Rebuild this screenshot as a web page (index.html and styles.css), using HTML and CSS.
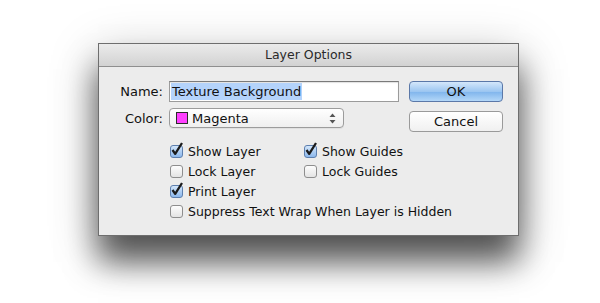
FILE: index.html
```html
<!DOCTYPE html>
<html>
<head>
<meta charset="UTF-8">
<title>Layer Options</title>
<link rel="stylesheet" href="styles.css">
</head>
<body>
<div class="stage">
  <div class="dialog">
    <div class="titlebar">Layer Options</div>
    <div class="content">
      <div class="form">
        <div class="row">
          <label class="label">Name:</label>
          <div class="textfield"><span class="sel">Texture Background</span></div>
        </div>
        <div class="row">
          <label class="label">Color:</label>
          <div class="popup">
            <span class="swatch"></span>
            <span class="popup-text">Magenta</span>
            <svg class="arrows" width="7" height="11" viewBox="0 0 7 11">
              <path d="M3.5 0.5 L6.5 4 L0.5 4 Z" fill="#555"/>
              <path d="M3.5 10.5 L6.5 7 L0.5 7 Z" fill="#555"/>
            </svg>
          </div>
        </div>
        <div class="checks">
          <div class="check-col">
            <div class="check"><span class="box on"><svg width="14" height="15" viewBox="0 0 14 15"><path d="M2.5 8 L5.2 11.8 L12 1" fill="none" stroke="#1b1b1b" stroke-width="2.3" stroke-linejoin="round"/></svg></span>Show Layer</div>
            <div class="check"><span class="box"></span>Lock Layer</div>
            <div class="check"><span class="box on"><svg width="14" height="15" viewBox="0 0 14 15"><path d="M2.5 8 L5.2 11.8 L12 1" fill="none" stroke="#1b1b1b" stroke-width="2.3" stroke-linejoin="round"/></svg></span>Print Layer</div>
          </div>
          <div class="check-col">
            <div class="check"><span class="box on"><svg width="14" height="15" viewBox="0 0 14 15"><path d="M2.5 8 L5.2 11.8 L12 1" fill="none" stroke="#1b1b1b" stroke-width="2.3" stroke-linejoin="round"/></svg></span>Show Guides</div>
            <div class="check"><span class="box"></span>Lock Guides</div>
          </div>
        </div>
        <div class="check wide"><span class="box"></span>Suppress Text Wrap When Layer is Hidden</div>
      </div>
      <div class="buttons">
        <div class="btn default">OK</div>
        <div class="btn">Cancel</div>
      </div>
    </div>
  </div>
</div>
</body>
</html>
```

FILE: styles.css
```css
body{margin:0;padding:0;background:#fff;font-family:"DejaVu Sans","Liberation Sans",sans-serif;font-size:13px;color:#111;}
.stage{padding:43px 0 0 98px;height:260px;}
.dialog{width:419px;height:191px;border:1px solid #6e6e6e;background:#ececec;box-shadow:0 26px 30px rgba(0,0,0,0.6),0 12px 45px rgba(0,0,0,0.25);}
.titlebar{height:22px;line-height:22px;text-align:center;font-size:12.5px;color:#2a2a2a;background:linear-gradient(#ebebeb,#d2d2d2);border-bottom:1px solid #8f8f8f;}
.content{display:flex;padding:14px 0 0 0;}
.form{width:310px;flex:none;}
.row{display:flex;align-items:center;margin-bottom:6px;}
.label{width:64px;text-align:right;padding-right:6px;}
.textfield{width:226px;height:17px;border:1px solid #9b9b9b;border-top-color:#7a7a7a;background:#fff;padding:1px;box-shadow:inset 0 1px 1px rgba(0,0,0,0.12);display:flex;align-items:center;}
.sel{background:#b4d3fb;line-height:17px;padding:0 1px;}
.popup{width:173px;height:18px;border:1px solid #9c9c9c;border-radius:4px;background:linear-gradient(#ffffff,#efefef);display:flex;align-items:center;box-shadow:0 1px 0 rgba(0,0,0,0.05);}
.swatch{width:10px;height:10px;border:1px solid #2b2b2b;background:#ff40ff;margin:0 4px 0 6px;}
.popup-text{flex:1;}
.arrows{margin-right:7px;}
.checks{display:flex;padding-left:71px;margin-top:13px;}
.check-col{width:134px;flex:none;}
.check{display:flex;align-items:center;height:20px;white-space:nowrap;font-size:12.5px;}
.check.wide{padding-left:71px;}
.box{width:11px;height:11px;border:1px solid #8e8e8e;border-radius:3px;background:linear-gradient(#fdfdfd,#e4e4e4);margin-right:5px;position:relative;flex:none;}
.box.on{background:linear-gradient(#d3e6fb,#8cb8ec);border-color:#5d7fae;}
.box svg{position:absolute;left:-1px;top:-4px;}
.btn{width:92px;height:19px;border:1px solid #9a9a9a;border-radius:4px;background:linear-gradient(#ffffff,#f0f0f0);text-align:center;line-height:19px;margin-bottom:9px;}
.btn.default{background:linear-gradient(#d4e7fb,#9cc6f1 50%,#7fb4ec 51%,#b3d7f8);border-color:#5b78a8;}
```
